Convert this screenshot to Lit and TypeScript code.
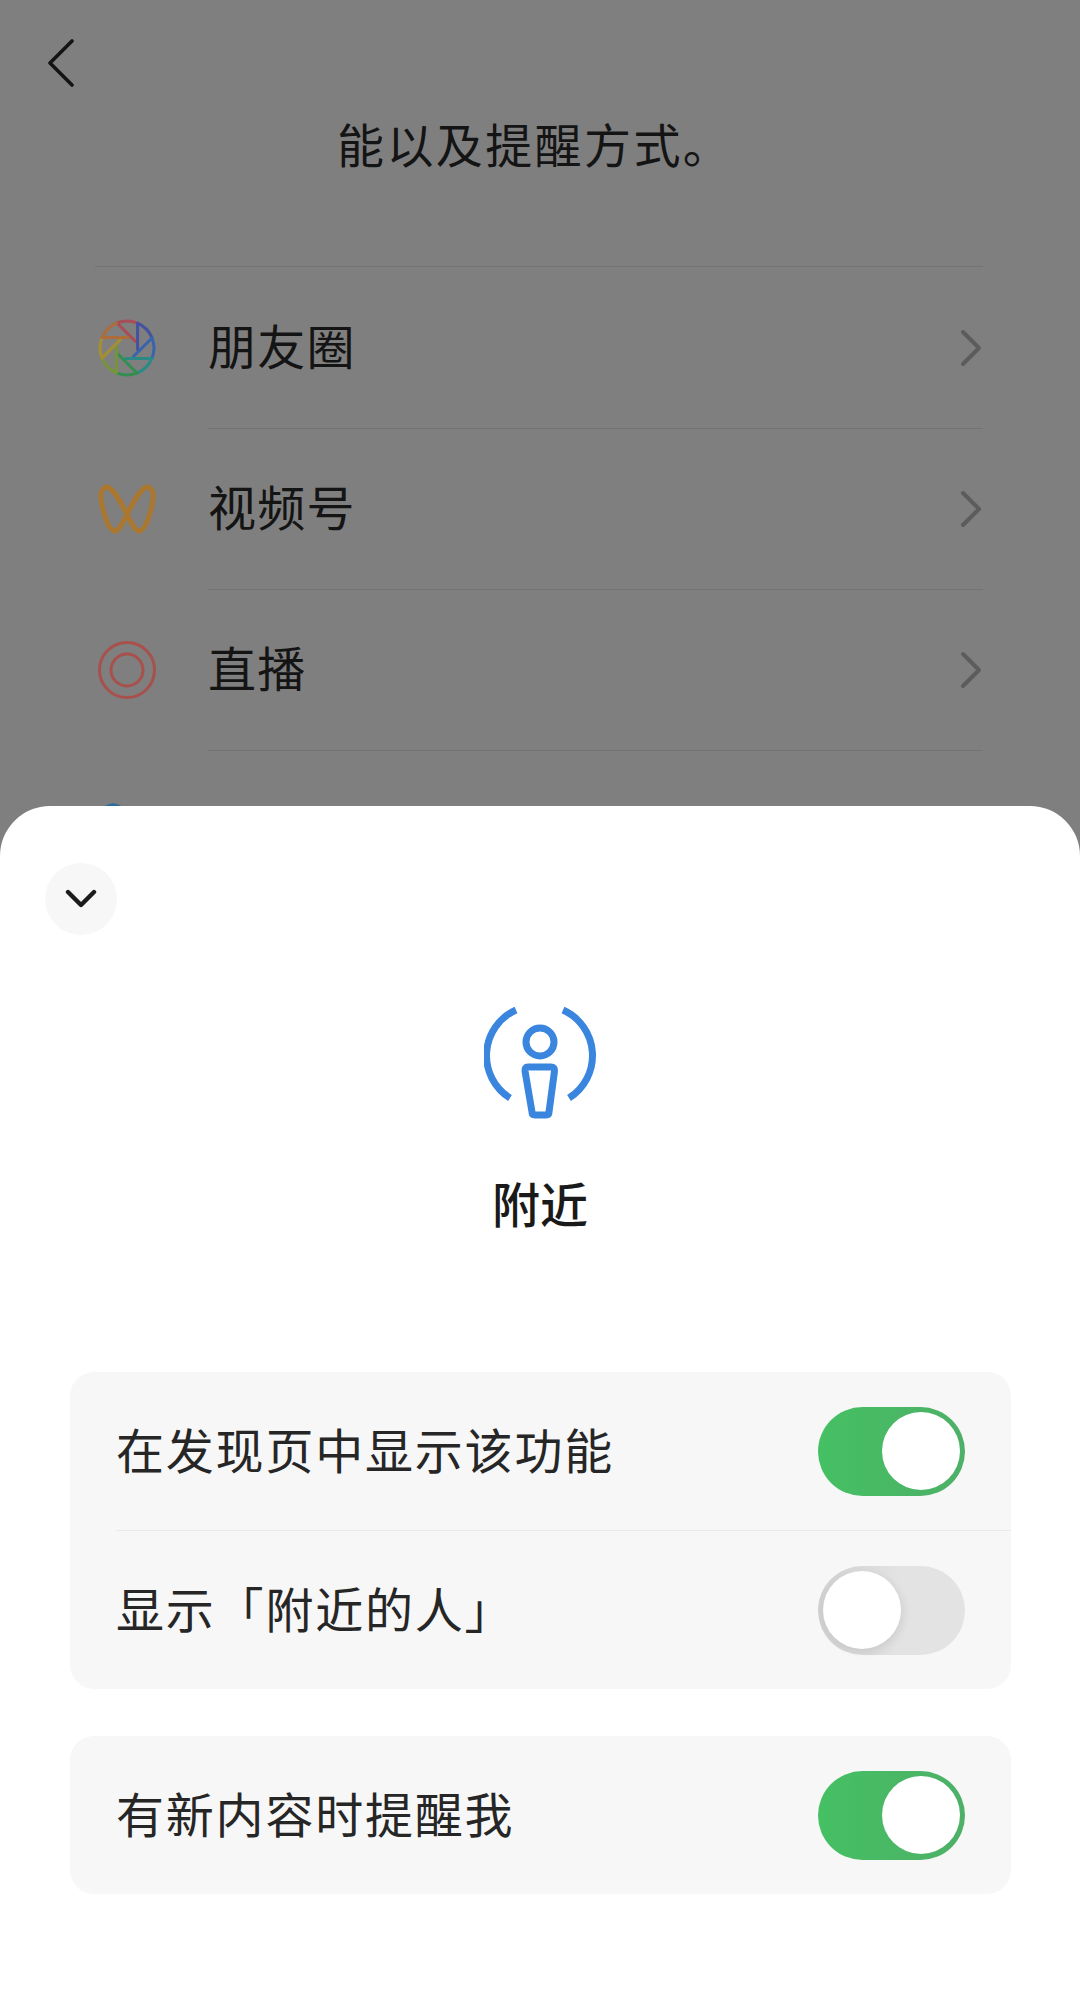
import { LitElement, html, css, svg } from 'lit';
import { customElement } from 'lit/decorators.js';

const BLADES = ['#a94c56', '#45529f', '#3863ad', '#2c8a84', '#338f50', '#759638', '#a68f30', '#ae6c3b'];

function apertureBlades() {
  // each blade: one stretch of the rim plus the edge going in, rotated around the centre
  return BLADES.map((color, i) => {
    const a = i * 45;
    return svg`<g transform="rotate(${a} 29 29)" stroke=${color}>
      <path d="M19 4A27 27 0 0 1 39.400 4.100" />
      <path d="M19 4L37.300 22.300" />
    </g>`;
  });
}

@customElement('app-root')
export class AppRoot extends LitElement {
  static override styles = css`
    :host {
      display: block;
      width: 1080px;
      height: 2002px;
      overflow: hidden;
      background: #7f7f7f;
      font-family: 'Noto Sans CJK SC', sans-serif;
      color: #141414;
    }
    .behind {
      height: 806px;
      overflow: hidden;
      box-sizing: border-box;
      padding-top: 39px;
    }
    .back {
      display: block;
      width: 26px;
      height: 48px;
      margin-left: 48px;
    }
    .intro {
      margin: 26px 0 0 337px;
      font-size: 47px;
      line-height: 60px;
      letter-spacing: 2.4px;
      white-space: nowrap;
    }
    .list {
      margin: 93px 97px 0 95px;
      border-top: 1px solid #737373;
    }
    .item {
      display: flex;
      align-items: center;
      height: 161px;
    }
    .item + .item .body {
      border-top: 1px solid #737373;
    }
    .icon {
      width: 113px;
      flex: none;
      display: flex;
    }
    .icon svg {
      margin-left: 3px;
      display: block;
    }
    .body {
      flex: 1;
      height: 100%;
      box-sizing: border-box;
      display: flex;
      align-items: center;
      justify-content: space-between;
      font-size: 48px;
      letter-spacing: 1.2px;
    }
    .body span {
      padding-bottom: 8px;
    }
    .arrow {
      display: block;
      margin-right: 1px;
    }
    .sheet {
      height: 1196px;
      background: #fff;
      border-radius: 50px 50px 0 0;
      box-sizing: border-box;
      padding-top: 57px;
    }
    .close {
      width: 72px;
      height: 72px;
      margin-left: 45px;
      border-radius: 50%;
      background: #f7f7f7;
      display: flex;
      align-items: center;
      justify-content: center;
    }
    .hero {
      display: flex;
      flex-direction: column;
      align-items: center;
      margin-top: 66px;
    }
    .hero svg {
      display: block;
      margin-left: 3px;
    }
    .title {
      margin-top: 48px;
      font-size: 48px;
      line-height: 66px;
      font-weight: 500;
      color: #1a1a1a;
    }
    .card {
      margin: 47px 69px 0 70px;
      background: #f7f7f7;
      border-radius: 24px;
      color: #262626;
      font-size: 48px;
      letter-spacing: 1.8px;
    }
    .card.first {
      margin-top: 137px;
    }
    .row {
      display: flex;
      align-items: center;
      justify-content: space-between;
      height: 158px;
      margin-left: 46px;
      padding-right: 46px;
    }
    .row span {
      padding-bottom: 6px;
    }
    .row + .row {
      border-top: 1px solid #e9e9e9;
    }
    .toggle {
      width: 147px;
      height: 89px;
      box-sizing: border-box;
      padding: 5px;
      border-radius: 45px;
      display: flex;
      align-items: center;
      justify-content: flex-end;
      background: linear-gradient(90deg, #45c063, #4db067);
    }
    .toggle.off {
      justify-content: flex-start;
      background: linear-gradient(90deg, #cfcfcf, #e3e3e4 55%);
    }
    .knob {
      width: 78px;
      height: 78px;
      border-radius: 50%;
      background: #fff;
    }
    .toggle.off .knob {
      box-shadow: 3px 3px 8px rgba(0, 0, 0, 0.08);
    }
  `;

  private _toggle(on: boolean) {
    return html`<div class="toggle ${on ? '' : 'off'}"><div class="knob"></div></div>`;
  }

  private _arrow() {
    return html`<svg class="arrow" width="22" height="38" viewBox="0 0 22 38" fill="none" stroke="#5c5c5c" stroke-width="4" stroke-linecap="round" stroke-linejoin="round">
      <path d="M3 3L19 19L3 35" />
    </svg>`;
  }

  override render() {
    return html`
      <div class="behind">
        <svg class="back" viewBox="0 0 26 48" fill="none" stroke="#141414" stroke-width="3.6" stroke-linecap="round" stroke-linejoin="round">
          <path d="M24 2L2 24L24 46" />
        </svg>
        <div class="intro">能以及提醒方式。</div>
        <div class="list">
          <div class="item">
            <div class="icon">
              <svg width="58" height="58" viewBox="0 0 58 58" fill="none" stroke-width="3" stroke-linecap="round">
                ${apertureBlades()}
              </svg>
            </div>
            <div class="body"><span>朋友圈</span>${this._arrow()}</div>
          </div>
          <div class="item">
            <div class="icon">
              <svg width="58" height="50" viewBox="0 0 58 50" fill="none" stroke="#a9772f" stroke-width="5" stroke-linejoin="round">
                <path d="M48 3C54 3 56 9 55 15C53 30 47 47 41 47C33 47 24 11 10 3C4 3 2 9 3 15C5 30 11 47 17 47C25 47 34 11 48 3Z" />
              </svg>
            </div>
            <div class="body"><span>视频号</span>${this._arrow()}</div>
          </div>
          <div class="item">
            <div class="icon">
              <svg width="58" height="58" viewBox="0 0 58 58" fill="none" stroke="#a8504c" stroke-width="3">
                <circle cx="29" cy="29" r="27.500" />
                <circle cx="29" cy="29" r="16" />
              </svg>
            </div>
            <div class="body"><span>直播</span>${this._arrow()}</div>
          </div>
          <div class="item">
            <div class="icon">
              <svg width="58" height="58" viewBox="0 0 58 58" fill="none" stroke="#2f6c9c" stroke-width="3.4">
                <circle cx="15" cy="15" r="12" />
              </svg>
            </div>
            <div class="body"></div>
          </div>
        </div>
      </div>
      <div class="sheet">
        <div class="close">
          <svg width="32" height="20" viewBox="0 0 32 20" fill="none" stroke="#1c1c1c" stroke-width="4.4" stroke-linecap="round" stroke-linejoin="round">
            <path d="M3 3L16 16L29 3" />
          </svg>
        </div>
        <div class="hero">
          <svg width="115" height="120" viewBox="0 0 115 120" fill="none" stroke="#3a86df" stroke-width="7">
            <path d="M32 9A50 50 0 0 0 26 97" />
            <path d="M79 9A50 50 0 0 1 85 97" />
            <circle cx="56" cy="41" r="14" />
            <path d="M44 66H67Q71 66 70.500 70L65 111Q65 114 62 114H51Q48 114 48 111L41 70Q40.500 66 44 66Z" stroke-linejoin="round" />
          </svg>
          <div class="title">附近</div>
        </div>
        <div class="card first">
          <div class="row"><span>在发现页中显示该功能</span>${this._toggle(true)}</div>
          <div class="row"><span>显示「附近的人」</span>${this._toggle(false)}</div>
        </div>
        <div class="card">
          <div class="row"><span>有新内容时提醒我</span>${this._toggle(true)}</div>
        </div>
      </div>
    `;
  }
}
